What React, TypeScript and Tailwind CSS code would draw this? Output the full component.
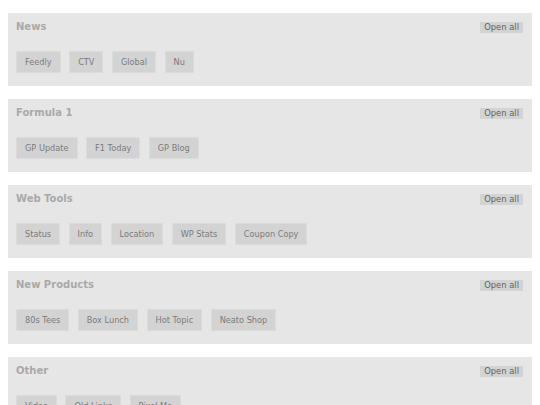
const sections = [
  { title: "News", links: ["Feedly", "CTV", "Global", "Nu"] },
  { title: "Formula 1", links: ["GP Update", "F1 Today", "GP Blog"] },
  { title: "Web Tools", links: ["Status", "Info", "Location", "WP Stats", "Coupon Copy"] },
  { title: "New Products", links: ["80s Tees", "Box Lunch", "Hot Topic", "Neato Shop"] },
  { title: "Other", links: ["Video", "Old Links", "Pixel Me"] }
];

function Section({ title, links }: { title: string; links: string[] }) {
  return (
    <div className="bg-[#e6e6e6] pt-[7px] pr-[9px] pb-[13px] pl-2">
      <div className="flex h-[13px] items-end justify-between">
        <h2 className="self-start text-[10px] leading-[13px] font-bold text-[#a9a9a9]">{title}</h2>
        <button className="h-[11px] bg-[#d3d3d3] px-[4px] text-[8.4px] leading-[11px] text-[#5f5f5f]">Open all</button>
      </div>
      <div className="mt-[18px] flex gap-[8.5px]">
        {links.map((link) => (
          <a
            key={link}
            className="flex h-[22px] items-center border border-[#dbdbdb] bg-[#d3d3d3] px-[8px] text-[8.2px] text-[#7b7b7b]"
          >
            {link}
          </a>
        ))}
      </div>
    </div>
  );
}

export default function App() {
  return (
    <div className="flex min-h-screen flex-col gap-[13px] bg-white px-2 pt-[13px] pb-4 font-['DejaVu_Sans',sans-serif]">
      {sections.map((s) => (
        <Section key={s.title} {...s} />
      ))}
    </div>
  );
}
